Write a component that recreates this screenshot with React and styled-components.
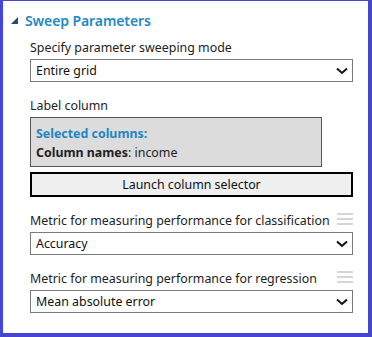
import React from "react";
import styled, { createGlobalStyle } from "styled-components";

const GlobalStyle = createGlobalStyle`
  body {
    margin: 0;
    background: #fff;
    font-family: "Noto Sans", "Open Sans", Arial, sans-serif;
  }
`;

export default function App() {
  return (
    <>
      <GlobalStyle />
      <Frame>
        <Header>
          <Triangle width="7" height="7" viewBox="0 0 7 7">
            <polygon points="7,0 7,7 0,7" fill="#1f4f72" />
          </Triangle>
          <Title>Sweep Parameters</Title>
        </Header>

        <Body>
          <Field>
            <Label>Specify parameter sweeping mode</Label>
            <Select>
              <span>Entire grid</span>
              <Chevron />
            </Select>
          </Field>

          <Field>
            <Label>Label column</Label>
            <ColumnsBox>
              <SelectedTitle>Selected columns:</SelectedTitle>
              <ColumnLine>
                <b>Column names</b>: income
              </ColumnLine>
            </ColumnsBox>
            <LaunchButton>Launch column selector</LaunchButton>
          </Field>

          <Field $gap={14}>
            <LabelRow>
              <Label>Metric for measuring performance for classification</Label>
              <Grip />
            </LabelRow>
            <Select>
              <span>Accuracy</span>
              <Chevron />
            </Select>
          </Field>

          <Field $gap={14}>
            <LabelRow>
              <Label>Metric for measuring performance for regression</Label>
              <Grip />
            </LabelRow>
            <Select>
              <span>Mean absolute error</span>
              <Chevron />
            </Select>
          </Field>
        </Body>
      </Frame>
    </>
  );
}

const Chevron = () => (
  <ChevronSvg width="12" height="8" viewBox="0 0 12 8">
    <polyline
      points="1,1.5 6,6 11,1.5"
      fill="none"
      stroke="#111"
      strokeWidth="2"
    />
  </ChevronSvg>
);

const Grip = () => (
  <GripSvg width="16" height="12" viewBox="0 0 16 12">
    <rect x="0" y="0" width="16" height="2" fill="#d6d6d6" />
    <rect x="0" y="5" width="16" height="2" fill="#d6d6d6" />
    <rect x="0" y="10" width="16" height="2" fill="#d6d6d6" />
  </GripSvg>
);

const Frame = styled.div`
  width: 372px;
  height: 337px;
  box-sizing: border-box;
  border-style: solid;
  border-color: #4646d2;
  border-width: 1px 4px 4px 3px;
  background: #fff;
`;

const Header = styled.div`
  display: flex;
  align-items: center;
  gap: 7px;
  padding: 9px 0 0 8px;
  height: 20px;
`;

const Triangle = styled.svg`
  display: block;
  margin-top: 1px;
`;

const Title = styled.div`
  font-size: 14px;
  font-weight: 600;
  color: #2389c0;
  letter-spacing: -0.1px;
`;

const Body = styled.div`
  padding: 8px 15px 0 27px;
  display: flex;
  flex-direction: column;
`;

const Field = styled.div`
  display: flex;
  flex-direction: column;
  & + & {
    margin-top: ${(p) => p.$gap || 13}px;
  }
`;

const LabelRow = styled.div`
  display: flex;
  align-items: flex-start;
  justify-content: space-between;
`;

const Label = styled.div`
  font-size: 12.4px;
  color: #222;
  height: 21px;
  line-height: 20px;
`;

const GripSvg = styled.svg`
  display: block;
  margin-top: 2px;
`;

const Select = styled.div`
  height: 23px;
  box-sizing: border-box;
  border: 1px solid #7a7a7a;
  display: flex;
  align-items: center;
  justify-content: space-between;
  padding: 0 4px 0 5px;
  font-size: 12.4px;
  color: #111;
`;

const ChevronSvg = styled.svg`
  display: block;
`;

const ColumnsBox = styled.div`
  width: 292px;
  height: 50px;
  box-sizing: border-box;
  border: 1px solid #555;
  background: #dcdcdc;
  padding: 6px 5px 0 5px;
`;

const SelectedTitle = styled.div`
  font-size: 12.4px;
  font-weight: 700;
  color: #1f87bf;
  line-height: 19px;
`;

const ColumnLine = styled.div`
  font-size: 12.4px;
  color: #222;
  line-height: 19px;
  b {
    font-weight: 700;
  }
`;

const LaunchButton = styled.button`
  margin-top: 5px;
  height: 25px;
  box-sizing: border-box;
  border: 2px solid #000;
  background: #efefef;
  font-family: inherit;
  font-size: 12.4px;
  color: #111;
  padding: 0;
`;
